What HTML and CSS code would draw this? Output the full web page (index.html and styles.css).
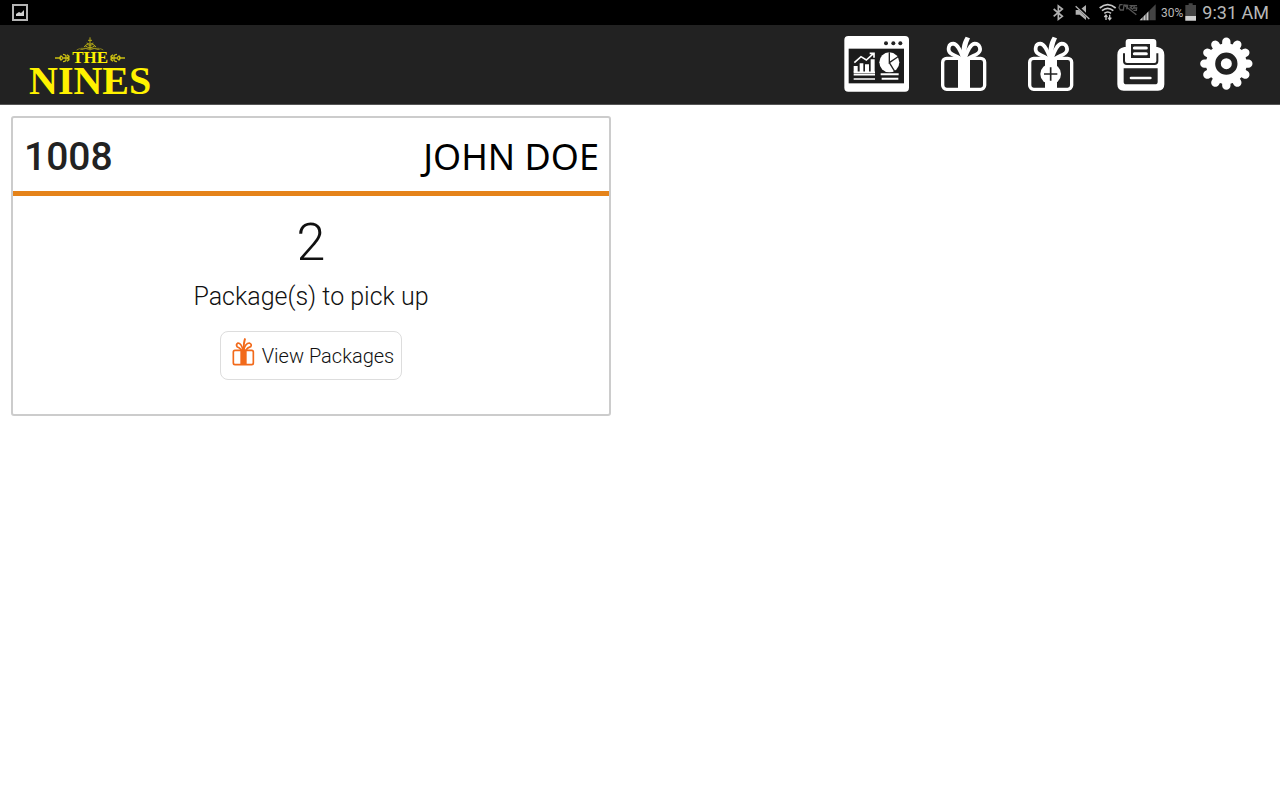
FILE: index.html
```
<!DOCTYPE html>
<html lang="en">
<head>
    <meta charset="UTF-8">
    <meta name="viewport" content="width=device-width, initial-scale=1.0">
    <title>The Nines - Packages</title>
    <link rel="stylesheet" href="styles.css">
</head>
<body>
    <!-- Tablet status bar -->
    <div class="status-bar">
        <svg class="screenshot-icon" width="16" height="17" viewBox="0 0 16 17">
            <rect x="1" y="1" width="14" height="15" fill="none" stroke="#b5b5b5" stroke-width="2"/>
            <path d="M4 12V10l3-2 2 1 3-3v6z" fill="#d0d0d0"/>
        </svg>
        <div class="status-right">
            <svg width="22" height="25" viewBox="24 0 66 75" fill="none" stroke="#b0b0b0" stroke-width="5">
                <path d="M41 27l26 22-12 9V18l12 9-26 22"/>
            </svg>
            <svg width="24" height="25" viewBox="90 0 72 75">
                <path d="M107 30h12l19-15v45l-19-16h-12z" fill="#b0b0b0"/>
                <path d="M109 17l40 38" stroke="#000" stroke-width="9"/>
                <path d="M107 19l41 38" stroke="#b0b0b0" stroke-width="4"/>
            </svg>
            <svg width="24" height="25" viewBox="162 0 72 75" fill="none" stroke="#c8c8c8" stroke-width="5">
                <path d="M179 24q24-20 48 0M186 32q17-14 34 0M193 40q10-8 20 0"/>
                <path d="M198 60V45m-5 6l5-6 4 6M209 44v15m-5-6l5 6 5-6" stroke-width="4"/>
            </svg>
            <svg width="20" height="25" viewBox="234 0 60 75" fill="none" stroke="#555" stroke-width="4">
                <path d="M248 14h-8l-3 9 4 7h9l2-15 11 1-3 12M268 17h10l-7 6 8 5M291 17h-8l-2 7h9l-1 7h-9M252 15l37 29"/>
            </svg>
            <svg width="20" height="25" viewBox="294 0 60 75">
                <path d="M299 61L347 13v48z" fill="#444"/>
                <path d="M299 61l27-27v27z" fill="#c8c8c8"/>
                <path d="M309 45v17M318 36v26M327 28v34" stroke="#000" stroke-width="2"/>
            </svg>
            <span class="battery-level">30%</span>
            <svg width="12" height="25" viewBox="438 0 36 75">
                <path d="M449 10h12v5h10v47h-32V15h10z" fill="#444"/>
                <path d="M439 48h32v14h-32z" fill="#d0d0d0"/>
            </svg>
            <span class="clock">9:31 AM</span>
        </div>
    </div>

    <!-- App header -->
    <header class="app-header">
        <div class="logo">
            <svg width="28" height="14" viewBox="0 0 84 42" fill="none" stroke="#b5ab16" stroke-width="3">
                <path d="M42 1v38M36 10h12M32 18q10 8 20 0M24 30q10-14 18-2 8-12 18 2M27 26q15 12 30 0"/>
                <path d="M2 39q8-7 16-1 10-8 24 1 14-9 24-1 8-6 16 1M14 34h56" stroke-width="2"/>
            </svg>
            <div class="logo-the">
                <svg width="15" height="10" viewBox="0 0 45 30" fill="none" stroke="#c8bd12" stroke-width="4">
                    <path d="M0 15h18m0-6l7 6-7 6-5-6zM24 4q12 1 8 11 4 10-8 11M27 15h17M36 5l6 5-6 5 6 5-6 5"/>
                </svg>
                <span>THE</span>
                <svg width="15" height="10" viewBox="0 0 45 30" fill="none" stroke="#c8bd12" stroke-width="4">
                    <path d="M45 15H27m0-6l-7 6 7 6 5-6zM21 4q-12 1-8 11-4 10 8 11M18 15H1M9 5L3 10l6 5-6 5 6 5"/>
                </svg>
            </div>
            <div class="logo-nines">NINES</div>
        </div>

        <nav class="toolbar">
            <button type="button" aria-label="Reports">
                <svg viewBox="9 21 216 180">
                    <rect x="28" y="24" width="194" height="167" rx="12" fill="#fff"/>
                    <circle cx="153" cy="46" r="6" fill="#222"/>
                    <circle cx="175" cy="46" r="6" fill="#222"/>
                    <circle cx="196" cy="46" r="6" fill="#222"/>
                    <rect x="41" y="62" width="166" height="104" fill="#1b1b1b"/>
                    <path d="M56 114h12v19H56zM74 106h11v27H74zM90 109h12v24H90zM107 94h12v39h-12z" fill="#fff"/>
                    <path d="M56 133h64M56 140h64M56 153h64" stroke="#fff" stroke-width="5"/>
                    <path d="M58 104l20-18 16 10 22-20M104 76h13v13" fill="none" stroke="#fff" stroke-width="5"/>
                    <circle cx="163" cy="103" r="30" fill="#fff"/>
                    <path d="M163 73v31l25-17M163 104l16 26" fill="none" stroke="#222" stroke-width="4"/>
                    <path d="M137 139h54M140 152h50" stroke="#fff" stroke-width="6"/>
                </svg>
            </button>
            <button type="button" aria-label="Packages">
                <svg viewBox="-12 21 216 180">
                    <rect x="38" y="91" width="126" height="93" rx="12" fill="none" stroke="#fff" stroke-width="10"/>
                    <path d="M84 88h36v98H84z" fill="#fff"/>
                    <path d="M99 90C92 70 84 49 70 47c-15 0-19 20-8 29 8 6 18 8 26 14M105 90c7-20 15-41 29-43 16 0 21 19 11 28-8 7-18 9-28 15" fill="none" stroke="#fff" stroke-width="11"/>
                    <path d="M95 92c-2-22-1-45 12-66l13 5c-9 18-13 39-10 61z" fill="#fff"/>
                </svg>
            </button>
            <button type="button" aria-label="Add package">
                <svg viewBox="-12 21 216 180">
                    <rect x="35" y="91" width="126" height="93" rx="12" fill="none" stroke="#fff" stroke-width="10"/>
                    <path d="M81 88h36v98H81z" fill="#fff"/>
                    <path d="M96 90C89 70 81 49 67 47c-15 0-19 20-8 29 8 6 18 8 26 14M102 90c7-20 15-41 29-43 16 0 21 19 11 28-8 7-18 9-28 15" fill="none" stroke="#fff" stroke-width="11"/>
                    <path d="M92 92c-2-22-1-45 12-66l13 5c-9 18-13 39-10 61z" fill="#fff"/>
                    <circle cx="98" cy="138" r="31" fill="#fff"/>
                    <path d="M78 138h40M98 118v40" stroke="#222" stroke-width="5"/>
                </svg>
            </button>
            <button type="button" aria-label="Print">
                <svg viewBox="-9 21 216 180">
                    <path d="M62 42q0-9 9-9h74q9 0 9 9v15h3q21 3 21 24v88q0 19-19 19H56q-19 0-19-19V81q0-21 21-24h4z" fill="#fff"/>
                    <path d="M57 76v23q0 9 9 9h82q9 0 9-9V76" fill="none" stroke="#222" stroke-width="6"/>
                    <path d="M78 48h57v42H78z" fill="#222"/>
                    <path d="M88 60h36M88 77h36" stroke="#fff" stroke-width="9" stroke-linecap="round"/>
                    <path d="M56 121h102v40q0 8-8 8H64q-8 0-8-8z" fill="#222"/>
                    <path d="M78 150h58" stroke="#fff" stroke-width="8" stroke-linecap="round"/>
                </svg>
            </button>
            <button type="button" aria-label="Settings">
                <svg viewBox="0 21 216 180">
                    <g stroke="#fff" stroke-width="25" stroke-linecap="round">
                        <path d="M109 41v132M43 107h132M76 50l66 114M142 50L76 164M52 74l114 66M166 74L52 140"/>
                    </g>
                    <circle cx="109" cy="107" r="61" fill="#fff"/>
                    <circle cx="109" cy="107" r="25" fill="#fff" stroke="#222" stroke-width="17"/>
                </svg>
            </button>
        </nav>
    </header>

    <!-- Resident cards -->
    <main class="cards">
        <section class="card">
            <div class="card-header">
                <span class="unit">1008</span>
                <span class="resident">JOHN DOE</span>
            </div>
            <div class="card-body">
                <div class="count">2</div>
                <div class="count-label">Package(s) to pick up</div>
                <button type="button" class="view-button">
                    <svg width="24" height="30" viewBox="66 48 72 90">
                        <rect x="70" y="88" width="60" height="43" rx="5" fill="none" stroke="#f26a1b" stroke-width="5"/>
                        <path d="M91 86h19v46H91z" fill="#f26a1b"/>
                        <path d="M99 87q-5-20-15-21-7 4-3 11 9 3 13 10M101 87q5-20 17-21 9 4 4 11-10 3-14 10" fill="none" stroke="#f26a1b" stroke-width="5"/>
                        <path d="M99 88q-2-24 4-37l5 2q-5 14-4 35z" fill="#f26a1b"/>
                    </svg>
                    <span>View Packages</span>
                </button>
            </div>
        </section>
    </main>
</body>
</html>
```
FILE: styles.css
```
* {
    box-sizing: border-box;
}

body {
    margin: 0;
    background-color: #fff;
    font-family: Roboto, "Liberation Sans", sans-serif;
}

button {
    font-family: inherit;
    cursor: pointer;
}

/* Status bar */
.status-bar {
    display: flex;
    justify-content: space-between;
    align-items: center;
    height: 25px;
    padding: 0 11px 0 12px;
    background-color: #000;
    color: #b8b8b8;
}

.status-right {
    display: flex;
    align-items: center;
}

.battery-level {
    margin: 0 2px 0 3px;
    font-size: 12px;
}

.clock {
    margin-left: 5px;
    font-size: 18px;
}

/* Header */
.app-header {
    display: flex;
    justify-content: space-between;
    align-items: center;
    height: 80px;
    padding: 0 18px 0 29px;
    background-color: #222;
    border-bottom: 1px solid #555;
}

.logo {
    display: flex;
    flex-direction: column;
    align-items: center;
    padding-top: 4px;
    color: #fff200;
    font-family: "Liberation Serif", serif;
    font-weight: bold;
}

.logo-the {
    display: flex;
    align-items: center;
    gap: 2px;
    font-size: 17px;
    line-height: 14px;
}

.logo-nines {
    font-size: 40px;
    line-height: 32px;
}

.toolbar {
    display: flex;
    gap: 16px;
}

.toolbar button {
    width: 72px;
    height: 60px;
    padding: 0;
    border: none;
    background: none;
}

.toolbar svg {
    display: block;
    width: 100%;
    height: 100%;
}

/* Cards */
.cards {
    padding: 11px;
}

.card {
    max-width: 600px;
    border: 2px solid #ccc;
    border-radius: 3px;
}

.card-header {
    display: flex;
    justify-content: space-between;
    align-items: center;
    height: 78px;
    padding: 4px 10px 0 11px;
    border-bottom: 5px solid #e5831a;
}

.unit {
    color: #222;
    font-size: 39px;
    font-weight: 500;
}

.resident {
    color: #000;
    font-family: "Noto Sans", "Open Sans", sans-serif;
    font-size: 36px;
    line-height: 44px;
}

.card-body {
    display: flex;
    flex-direction: column;
    align-items: center;
    padding: 17px 10px 34px;
    color: #111;
    font-weight: 300;
}

.count {
    font-size: 52px;
    line-height: 60px;
}

.count-label {
    margin: 8px 0 18px;
    font-size: 25px;
    line-height: 32px;
}

.view-button {
    display: flex;
    align-items: center;
    gap: 6px;
    height: 49px;
    padding: 0 7px 0 11px;
    border: 1px solid #ddd;
    border-radius: 8px;
    background-color: #fff;
    color: #111;
    font-size: 20px;
    font-weight: 300;
}

.view-button svg {
    margin-bottom: 8px;
}
```
